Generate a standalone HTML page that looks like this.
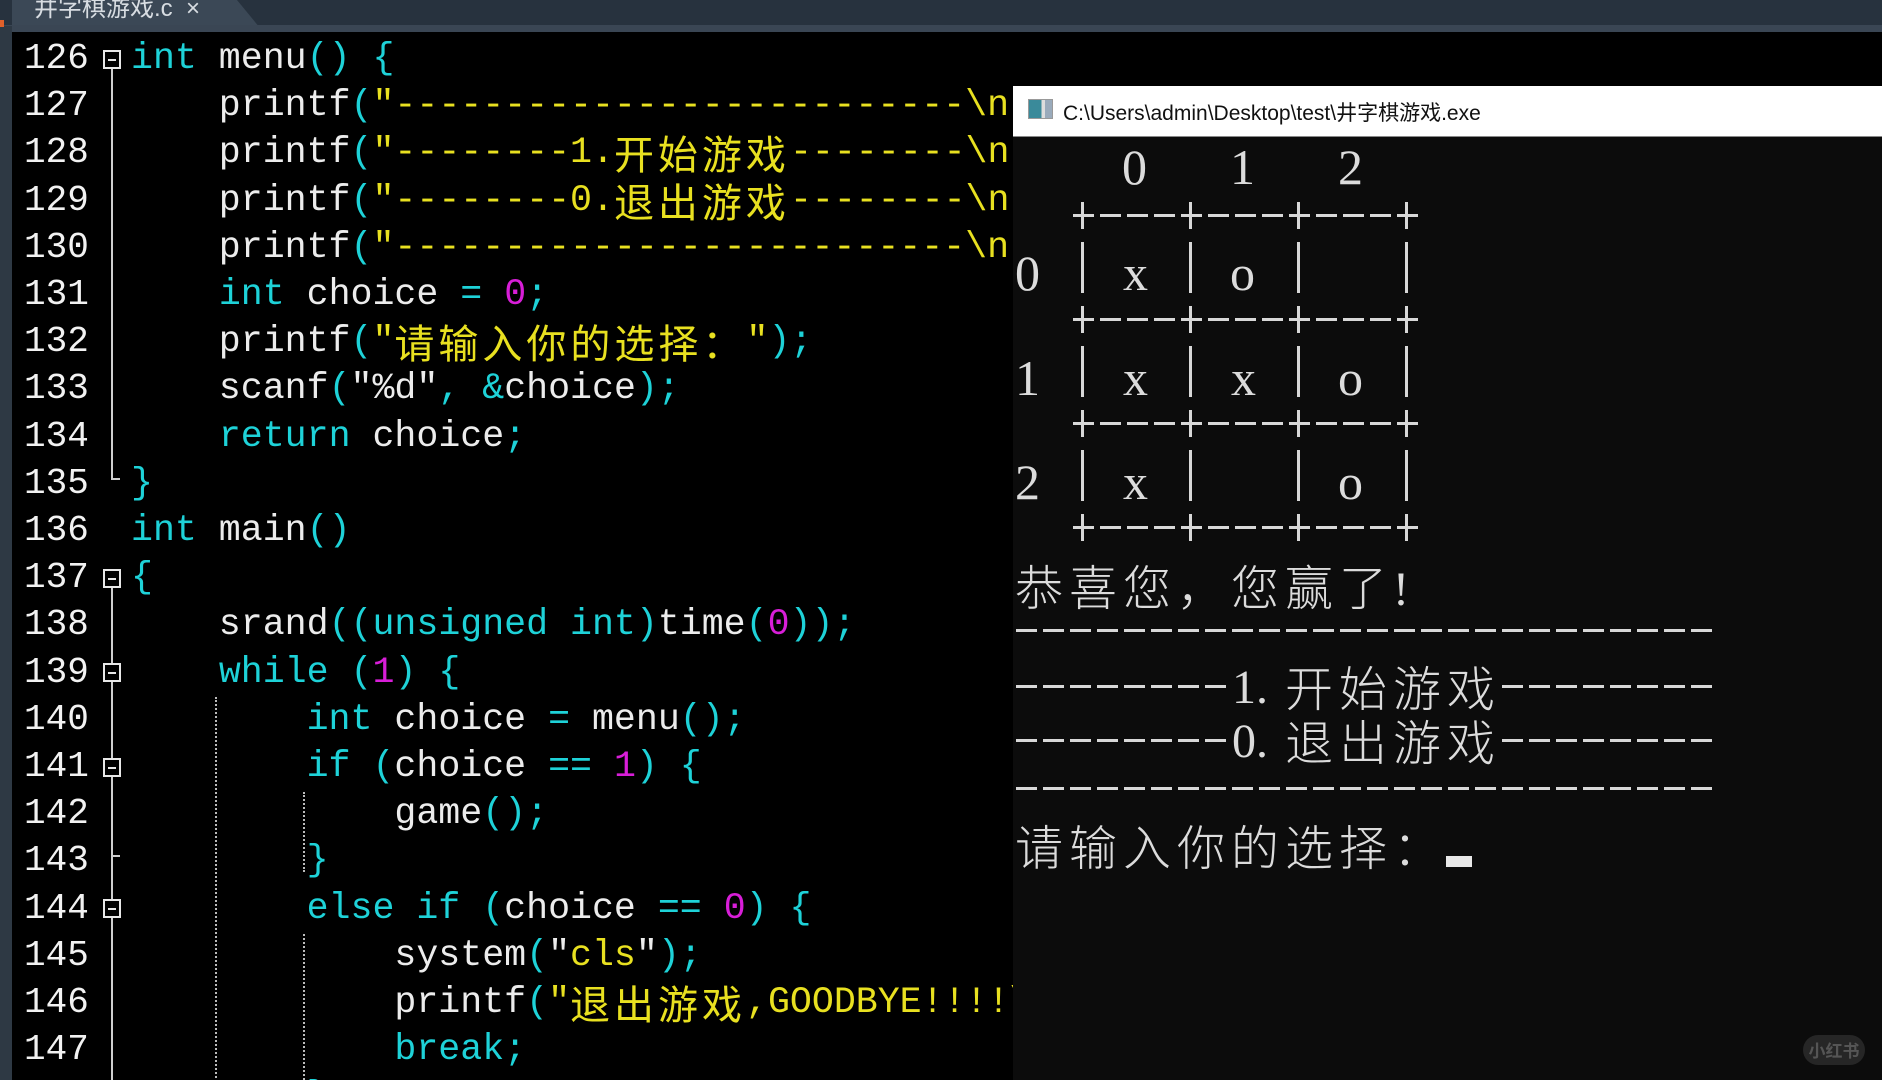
<!DOCTYPE html>
<html><head><meta charset="utf-8"><style>
*{margin:0;padding:0;box-sizing:border-box}
body{width:1882px;height:1080px;background:#000;overflow:hidden;position:relative;font-family:"Liberation Mono","Noto Sans CJK SC",monospace}
.tabbar{position:absolute;left:0;top:0;width:1882px;height:26px;background:#27323e}
.tab{position:absolute;left:12px;top:0;width:248px;height:28px;background:#3b4856;clip-path:polygon(0 0,225px 0,100% 100%,0 100%)}
.tabt{position:absolute;left:22px;top:-12px;font:24px "Liberation Sans","Noto Sans CJK SC",sans-serif;color:#d8dde2;white-space:pre}
.band{position:absolute;left:0;top:25px;width:1882px;height:7px;background:#3a4654}
.lstrip{position:absolute;left:0;top:26px;width:12px;height:1054px;background:#2e3944}
.orange{position:absolute;left:0;top:20px;width:4px;height:7px;background:#e0602a}
.ed{position:absolute;left:12px;top:32px;width:1001px;height:1048px;background:#000;overflow:hidden}
.code{position:absolute;left:0;top:3px;font-size:36.6px;line-height:47.2px;white-space:pre;color:#ececec}
.ln{position:absolute;left:12px;top:3px;font-size:36px;line-height:47.2px;white-space:pre;color:#f2f2f2}
.k{color:#1ed2d8}.s{color:#e8e020}.n{color:#d81ed8}.p{color:#1ed2d8}
.z{display:inline-block;height:47.2px;line-height:47.2px;vertical-align:top;font-size:40px;letter-spacing:4px;font-family:"Noto Sans CJK SC",sans-serif}
.fb{position:absolute;width:18px;height:19px;border:2px solid #e8e8e8;background:#000}
.fb:after{content:"";position:absolute;left:3px;top:7px;width:8px;height:2px;background:#e8e8e8}
.gl{position:absolute;width:2px;background:#cfcfcf}
.dg{position:absolute;width:0;border-left:2px dotted #bbb}
.con{position:absolute;left:1013px;top:86px;width:869px;height:994px;background:#0c0c0c}
.title{position:absolute;left:1013px;top:86px;width:869px;height:51px;background:#fff;border-bottom:1px solid #888}
.tt{position:absolute;left:50px;top:11px;font:21px "Liberation Sans","Noto Sans CJK SC",sans-serif;color:#111;white-space:pre}
.ico{position:absolute;left:15px;top:13px;width:25px;height:20px;border:1px solid #999;background:linear-gradient(90deg,#3a8a9a 0 55%,#ddd 55% 70%,#9ab 70%)}
.t{position:absolute;color:#dcdcdc;font-family:"Liberation Serif","Noto Serif CJK SC",serif;white-space:pre;line-height:1}
.hl{position:absolute;height:3px;background:repeating-linear-gradient(90deg,#d8d8d8 0 21px,transparent 21px 27px)}
.vb{position:absolute;width:3px;background:#d8d8d8}
.cj{position:absolute;color:#dcdcdc;font-family:"Noto Sans CJK SC",sans-serif;font-weight:300;font-size:48px;letter-spacing:6px;white-space:pre;line-height:1}
</style></head><body>
<div class="tabbar"></div>
<div class="tab"><div class="tabt">井字棋游戏.c  ×</div></div>
<div class="band"></div>
<div class="lstrip"></div><div class="orange"></div>
<div class="ed">
<div class="ln">126
127
128
129
130
131
132
133
134
135
136
137
138
139
140
141
142
143
144
145
146
147
148</div>
<div class="gl" style="left:99px;top:36px;height:412px"></div>
<div class="gl" style="left:99px;top:446px;width:9px;height:2px"></div>
<div class="gl" style="left:99px;top:556px;height:520px"></div>
<div class="gl" style="left:99px;top:823px;width:9px;height:2px"></div>
<div class="fb" style="left:91px;top:18px"></div>
<div class="fb" style="left:91px;top:537px"></div>
<div class="fb" style="left:91px;top:631px"></div>
<div class="fb" style="left:91px;top:726px"></div>
<div class="fb" style="left:91px;top:867px"></div>
<div class="dg" style="left:203px;top:665px;height:400px"></div>
<div class="dg" style="left:291px;top:760px;height:80px"></div>
<div class="dg" style="left:291px;top:902px;height:170px"></div>
<div class="code" style="left:119px"><span class="k">int</span> menu<span class="p">()</span> <span class="p">{</span>
    printf<span class="p">(</span><span class="s">"--------------------------\n");</span>
    printf<span class="p">(</span><span class="s">"--------1.<span class="z">开始游戏</span>--------\n");</span>
    printf<span class="p">(</span><span class="s">"--------0.<span class="z">退出游戏</span>--------\n");</span>
    printf<span class="p">(</span><span class="s">"--------------------------\n");</span>
    <span class="k">int</span> choice <span class="p">=</span> <span class="n">0</span><span class="p">;</span>
    printf<span class="p">(</span><span class="s">"<span class="z">请输入你的选择：</span>"</span><span class="p">);</span>
    scanf<span class="p">(</span>"%d"<span class="p">,</span> <span class="p">&amp;</span>choice<span class="p">);</span>
    <span class="k">return</span> choice<span class="p">;</span>
<span class="p">}</span>
<span class="k">int</span> main<span class="p">()</span>
<span class="p">{</span>
    srand<span class="p">((</span><span class="k">unsigned int</span><span class="p">)</span>time<span class="p">(</span><span class="n">0</span><span class="p">));</span>
    <span class="k">while</span> <span class="p">(</span><span class="n">1</span><span class="p">)</span> <span class="p">{</span>
        <span class="k">int</span> choice <span class="p">=</span> menu<span class="p">();</span>
        <span class="k">if</span> <span class="p">(</span>choice <span class="p">==</span> <span class="n">1</span><span class="p">)</span> <span class="p">{</span>
            game<span class="p">();</span>
        <span class="p">}</span>
        <span class="k">else if</span> <span class="p">(</span>choice <span class="p">==</span> <span class="n">0</span><span class="p">)</span> <span class="p">{</span>
            system<span class="p">(</span>"<span class="s">cls</span>"<span class="p">);</span>
            printf<span class="p">(</span><span class="s">"<span class="z">退出游戏</span>,GOODBYE!!!!\n");</span>
            <span class="k">break</span><span class="p">;</span>
        <span class="p">}</span></div>
</div>
<div class="con"></div>
<div class="title"><div class="ico"></div><div class="tt">C:\Users\admin\Desktop\test\井字棋游戏.exe</div></div>
<div class="t" style="left:1122px;top:142px;font-size:50px">0</div>
<div class="t" style="left:1230px;top:142px;font-size:50px">1</div>
<div class="t" style="left:1338px;top:142px;font-size:50px">2</div>
<div class="hl" style="left:1073px;top:214px;width:345px"></div>
<div class="hl" style="left:1073px;top:318px;width:345px"></div>
<div class="hl" style="left:1073px;top:422px;width:345px"></div>
<div class="hl" style="left:1073px;top:526px;width:345px"></div>
<div class="vb" style="left:1081px;top:202px;height:27px"></div><div class="vb" style="left:1189px;top:202px;height:27px"></div><div class="vb" style="left:1297px;top:202px;height:27px"></div><div class="vb" style="left:1405px;top:202px;height:27px"></div>
<div class="vb" style="left:1081px;top:306px;height:27px"></div><div class="vb" style="left:1189px;top:306px;height:27px"></div><div class="vb" style="left:1297px;top:306px;height:27px"></div><div class="vb" style="left:1405px;top:306px;height:27px"></div>
<div class="vb" style="left:1081px;top:410px;height:27px"></div><div class="vb" style="left:1189px;top:410px;height:27px"></div><div class="vb" style="left:1297px;top:410px;height:27px"></div><div class="vb" style="left:1405px;top:410px;height:27px"></div>
<div class="vb" style="left:1081px;top:514px;height:27px"></div><div class="vb" style="left:1189px;top:514px;height:27px"></div><div class="vb" style="left:1297px;top:514px;height:27px"></div><div class="vb" style="left:1405px;top:514px;height:27px"></div>
<div class="vb" style="left:1081px;top:242px;height:51px"></div><div class="vb" style="left:1189px;top:242px;height:51px"></div><div class="vb" style="left:1297px;top:242px;height:51px"></div><div class="vb" style="left:1405px;top:242px;height:51px"></div>
<div class="vb" style="left:1081px;top:346px;height:51px"></div><div class="vb" style="left:1189px;top:346px;height:51px"></div><div class="vb" style="left:1297px;top:346px;height:51px"></div><div class="vb" style="left:1405px;top:346px;height:51px"></div>
<div class="vb" style="left:1081px;top:450px;height:51px"></div><div class="vb" style="left:1189px;top:450px;height:51px"></div><div class="vb" style="left:1297px;top:450px;height:51px"></div><div class="vb" style="left:1405px;top:450px;height:51px"></div>
<div class="t" style="left:1015px;top:248px;font-size:50px">0</div>
<div class="t" style="left:1015px;top:353px;font-size:50px">1</div>
<div class="t" style="left:1015px;top:457px;font-size:50px">2</div>
<div class="t" style="left:1123px;top:248px;font-size:50px">x</div>
<div class="t" style="left:1230px;top:248px;font-size:50px">o</div>
<div class="t" style="left:1123px;top:353px;font-size:50px">x</div>
<div class="t" style="left:1231px;top:353px;font-size:50px">x</div>
<div class="t" style="left:1338px;top:353px;font-size:50px">o</div>
<div class="t" style="left:1123px;top:457px;font-size:50px">x</div>
<div class="t" style="left:1338px;top:457px;font-size:50px">o</div>
<div class="cj" style="left:1015px;top:560px">恭喜您，您赢了<span style="font-family:'Liberation Serif',serif">!</span></div>
<div class="hl" style="left:1016px;top:629px;width:700px"></div>
<div class="hl" style="left:1016px;top:685px;width:216px"></div>
<div class="t" style="left:1232px;top:664px;font-size:48px">1.</div>
<div class="cj" style="left:1285px;top:661px">开始游戏</div>
<div class="hl" style="left:1502px;top:685px;width:214px"></div>
<div class="hl" style="left:1016px;top:739px;width:216px"></div>
<div class="t" style="left:1232px;top:718px;font-size:48px">0.</div>
<div class="cj" style="left:1285px;top:715px">退出游戏</div>
<div class="hl" style="left:1502px;top:739px;width:214px"></div>
<div class="hl" style="left:1016px;top:787px;width:700px"></div>
<div class="cj" style="left:1015px;top:820px">请输入你的选择：</div>
<div style="position:absolute;left:1446px;top:856px;width:26px;height:11px;background:#e8e8e8"></div>
<div style="position:absolute;left:1803px;top:1035px;width:62px;height:30px;border-radius:15px;background:#262626;color:#555;font:bold 17px 'Noto Sans CJK SC',sans-serif;text-align:center;line-height:30px">小红书</div>
</body></html>
